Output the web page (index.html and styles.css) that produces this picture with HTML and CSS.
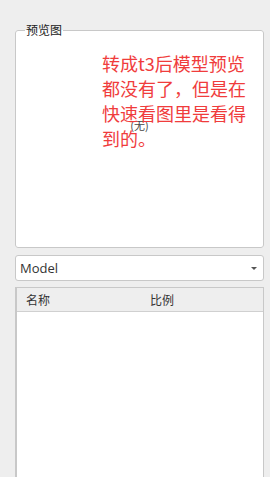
FILE: index.html
```html
<!DOCTYPE html>
<html>
<head>
<meta charset="utf-8">
<link rel="stylesheet" href="styles.css">
</head>
<body>
<div class="panel">
  <fieldset class="group">
    <legend class="group-title">预览图</legend>
    <div class="preview">
      <span class="none">(无)</span>
      <div class="note">转成t3后模型预览都没有了，但是在快速看图里是看得到的。</div>
    </div>
  </fieldset>
  <div class="combo">
    <span class="combo-text">Model</span>
    <span class="combo-arrow"></span>
  </div>
  <div class="table">
    <div class="thead">
      <span class="col-name">名称</span>
      <span class="col-ratio">比例</span>
    </div>
    <div class="tbody"></div>
  </div>
</div>
</body>
</html>
```
FILE: styles.css
```css
html, body {
  margin: 0;
  padding: 0;
  height: 100%;
  background: #eeeeee;
  font-family: "Noto Sans CJK SC", "Noto Sans", sans-serif;
  overflow: hidden;
}
.panel {
  display: flex;
  flex-direction: column;
  padding: 22px 6px 0 15px;
  height: 100%;
  box-sizing: border-box;
}
.group {
  margin: 0;
  padding: 0 9px 0 9px;
  border: 1px solid #c8c8c8;
  border-radius: 3px;
  background: #ffffff;
  height: 226px;
  box-sizing: border-box;
  position: relative;
}
.group-title {
  padding: 0 1px;
  font-size: 12px;
  line-height: 16px;
  color: #222;
}
.preview {
  position: relative;
  display: flex;
  justify-content: center;
  padding-top: 81px;
}
.none {
  font-size: 11px;
  line-height: 12px;
  color: #444;
}
.note {
  position: absolute;
  left: 77px;
  top: 13px;
  width: 152px;
  font-size: 18px;
  line-height: 25px;
  color: #f03c3c;
}
.combo {
  margin-top: 7px;
  height: 26px;
  box-sizing: border-box;
  border: 1px solid #c8c8c8;
  border-radius: 3px;
  background: #fff;
  display: flex;
  align-items: center;
  justify-content: space-between;
  padding: 0 6px 0 4px;
}
.combo-text {
  font-size: 13px;
  color: #333;
  font-family: "Open Sans", "Noto Sans", sans-serif;
}
.combo-arrow {
  width: 0;
  height: 0;
  border-left: 3px solid transparent;
  border-right: 3px solid transparent;
  border-top: 3px solid #555;
}
.table {
  margin-top: 6px;
  flex: 1;
  display: flex;
  flex-direction: column;
  border: 1px solid #c8c8c8;
  border-left-width: 2px;
  border-bottom: none;
  background: #fff;
}
.thead {
  height: 23px;
  background: #eeeeee;
  border-bottom: 1px solid #d0d0d0;
  display: flex;
  align-items: center;
  font-size: 12px;
  color: #333;
}
.col-name {
  padding-left: 9px;
  width: 124px;
}
.tbody {
  flex: 1;
}
```
